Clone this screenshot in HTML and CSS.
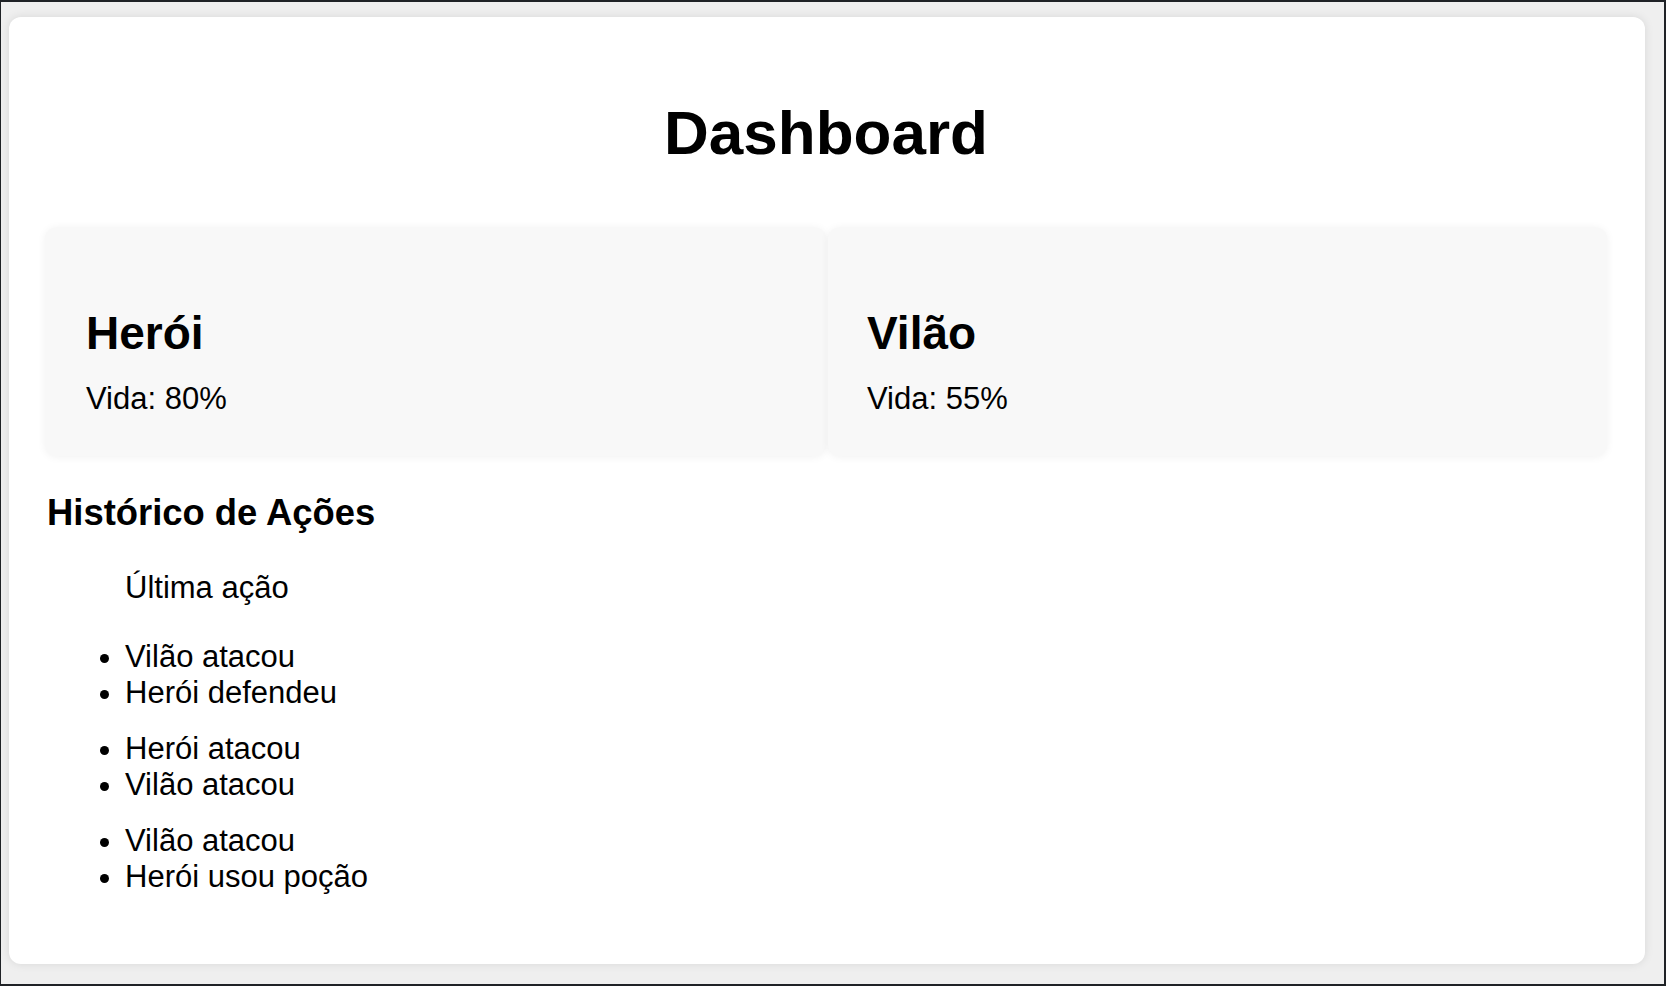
FILE: index.html
```html
<!DOCTYPE html>
<html lang="pt-BR">
<head>
<meta charset="utf-8">
<title>Dashboard</title>
<link rel="stylesheet" href="styles.css">
</head>
<body>
<div class="frame">
  <main class="container">
    <h1 class="title">Dashboard</h1>
    <section class="cards">
      <div class="card">
        <h2 class="card-title">Herói</h2>
        <p class="card-text">Vida: 80%</p>
      </div>
      <div class="card">
        <h2 class="card-title">Vilão</h2>
        <p class="card-text">Vida: 55%</p>
      </div>
    </section>
    <h3 class="history-title">Histórico de Ações</h3>
    <div class="history">
      <p class="last">Última ação</p>
      <ul class="group">
        <li>Vilão atacou</li>
        <li>Herói defendeu</li>
      </ul>
      <ul class="group">
        <li>Herói atacou</li>
        <li>Vilão atacou</li>
      </ul>
      <ul class="group">
        <li>Vilão atacou</li>
        <li>Herói usou poção</li>
      </ul>
    </div>
  </main>
</div>
</body>
</html>
```

FILE: styles.css
```css
html, body {
  margin: 0;
  padding: 0;
}

body {
  font-family: "Liberation Sans", Arial, sans-serif;
  color: #000;
  background: #1f2226;
}

.frame {
  box-sizing: border-box;
  width: 1666px;
  height: 986px;
  border-style: solid;
  border-color: #1f2226;
  border-width: 2px 2px 2px 1px;
  background: #efefef;
  padding: 15px 19px 20px 8px;
  display: flex;
  flex-direction: column;
}

.container {
  flex: 1;
  background: #ffffff;
  border-radius: 12px;
  box-shadow: 0 0 10px rgba(0, 0, 0, 0.10);
  padding: 81px 38px 0 36px;
}

.title {
  margin: 0;
  font-size: 62px;
  line-height: 70px;
  font-weight: bold;
  text-align: center;
}

.cards {
  display: flex;
  gap: 2px;
  margin-top: 59px;
}

.card {
  flex: 1;
  background: #f8f8f8;
  border-radius: 12px;
  box-shadow: 0 1px 8px rgba(0, 0, 0, 0.06);
  padding: 80px 40px 40px 41px;
}

.card + .card {
  padding-left: 39px;
}

.card-title {
  margin: 0;
  font-size: 46px;
  line-height: 52px;
  font-weight: bold;
}

.card-text {
  margin: 23px 0 0 0;
  font-size: 31px;
  line-height: 34px;
}

.history-title {
  margin: 36px 0 0 0;
  padding-left: 2px;
  font-size: 36.4px;
  line-height: 42px;
  font-weight: bold;
}

.history {
  margin-top: 36px;
  font-size: 31px;
  line-height: 36px;
}

.last {
  margin: 0;
  padding-left: 80px;
}

.group {
  margin: 33px 0 0 0;
  padding-left: 80px;
  list-style: disc;
}

.group + .group {
  margin-top: 20px;
}
```
